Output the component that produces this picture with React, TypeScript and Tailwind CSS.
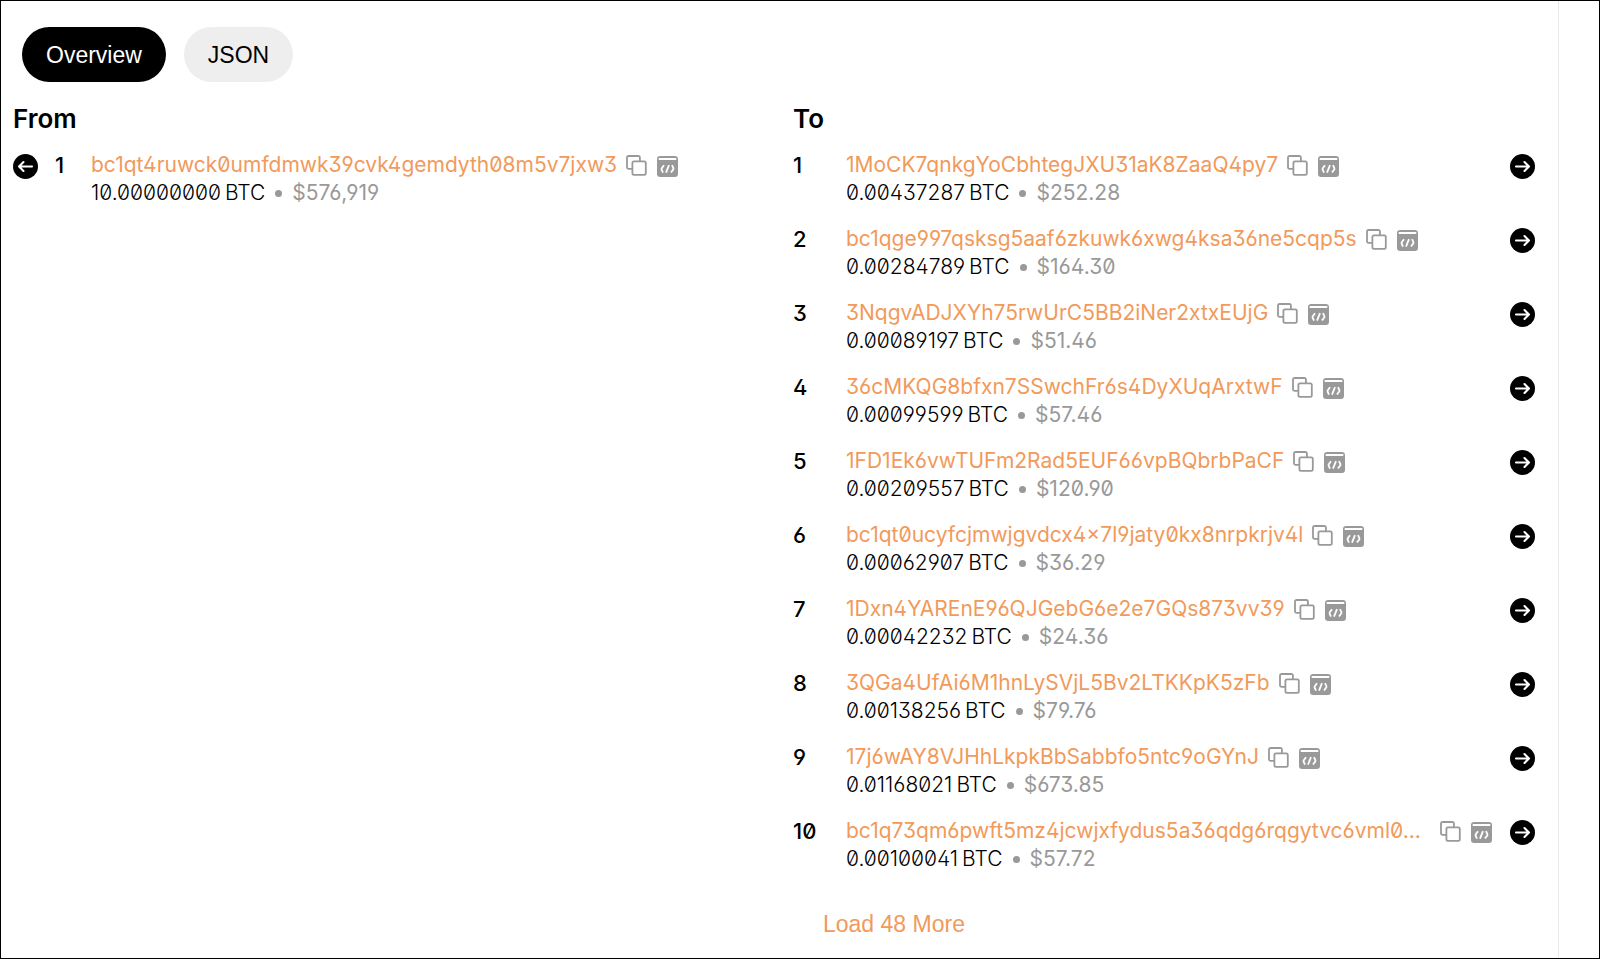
import { useState } from 'react';

interface Entry {
  address: string;
  btc: string;
  usd: string;
}

const inputs: Entry[] = [
  { address: 'bc1qt4ruwck0umfdmwk39cvk4gemdyth08m5v7jxw3', btc: '10.00000000', usd: '$576,919' },
];

const outputs: Entry[] = [
  { address: '1MoCK7qnkgYoCbhtegJXU31aK8ZaaQ4py7', btc: '0.00437287', usd: '$252.28' },
  { address: 'bc1qge997qsksg5aaf6zkuwk6xwg4ksa36ne5cqp5s', btc: '0.00284789', usd: '$164.30' },
  { address: '3NqgvADJXYh75rwUrC5BB2iNer2xtxEUjG', btc: '0.00089197', usd: '$51.46' },
  { address: '36cMKQG8bfxn7SSwchFr6s4DyXUqArxtwF', btc: '0.00099599', usd: '$57.46' },
  { address: '1FD1Ek6vwTUFm2Rad5EUF66vpBQbrbPaCF', btc: '0.00209557', usd: '$120.90' },
  { address: 'bc1qt0ucyfcjmwjgvdcx4x7l9jaty0kx8nrpkrjv4l', btc: '0.00062907', usd: '$36.29' },
  { address: '1Dxn4YAREnE96QJGebG6e2e7GQs873vv39', btc: '0.00042232', usd: '$24.36' },
  { address: '3QGa4UfAi6M1hnLySVjL5Bv2LTKKpK5zFb', btc: '0.00138256', usd: '$79.76' },
  { address: '17j6wAY8VJHhLkpkBbSabbfo5ntc9oGYnJ', btc: '0.01168021', usd: '$673.85' },
  { address: 'bc1q73qm6pwft5mz4jcwjxfydus5a36qdg6rqgytvc6vml0...', btc: '0.00100041', usd: '$57.72' },
];

function CopyIcon() {
  return (
    <svg className="w-[21px] h-[21px]" viewBox="0 0 21 21" fill="none" stroke="#999999" strokeWidth="1.8">
      <path d="M6.4 13.9H2.6A1.6 1.6 0 0 1 1 12.3V2.6A1.6 1.6 0 0 1 2.6 1h9.7A1.6 1.6 0 0 1 13.9 2.6v3.6" />
      <rect x="6.4" y="6.4" width="13.4" height="13.4" rx="1.6" />
    </svg>
  );
}

function CodeIcon() {
  return (
    <svg className="w-[21px] h-[21px]" viewBox="0 0 21 21" fill="none">
      <rect width="21" height="21" rx="3.2" fill="#999999" />
      <path d="M2.4 3h16.2" stroke="#fff" strokeWidth="1.8" strokeLinecap="round" />
      <path
        d="M7 9.2L4.6 12.6v1L6 16.6M15 9.2l1.4 3v1L14 16.6M12 9.2L9 16.6"
        stroke="#fff"
        strokeWidth="1.8"
        strokeLinejoin="round"
      />
    </svg>
  );
}

function ArrowIcon({ left = false }: { left?: boolean }) {
  return (
    <svg className="w-[25px] h-[25px]" viewBox="0 0 25 25" fill="none">
      <circle cx="12.5" cy="12.5" r="12.5" fill="#000" />
      <path
        d={left ? 'M19 12.5H6M10.5 8L6 12.5l4.5 4.5' : 'M6 12.5H19M14.5 8l4.5 4.5-4.5 4.5'}
        stroke="#fff"
        strokeWidth="2.1"
        strokeLinecap="round"
        strokeLinejoin="round"
      />
    </svg>
  );
}

function EntryBody({ entry }: { entry: Entry }) {
  const shortened = entry.address.endsWith('...');

  return (
    <div className="min-w-0 flex-1">
      <div className="flex items-start h-6">
        <a
          href="#address"
          className={`block h-[25px] overflow-hidden whitespace-nowrap leading-[26px] text-[#f19a5b] ${shortened ? 'flex-1' : ''}`}
        >
          {entry.address}
        </a>
        <button type="button" aria-label="Copy address" className="ml-[9px] mt-[3px] shrink-0">
          <CopyIcon />
        </button>
        <button type="button" aria-label="View script" className="ml-[10px] mt-1 shrink-0">
          <CodeIcon />
        </button>
      </div>
      <div className="mt-[3px] flex items-center leading-7">
        <span className="font-light">{entry.btc}</span>
        <span className="ml-1 font-light">BTC</span>
        <span className="mx-[10px] size-[7px] rounded-full bg-[#999999]" />
        <span className="text-[#999999]">{entry.usd}</span>
      </div>
    </div>
  );
}

export default function App() {
  const [tab, setTab] = useState<'overview' | 'json'>('overview');

  const tabClass = (active: boolean) =>
    `h-[55px] px-6 pt-0.5 rounded-full font-['Liberation_Sans',Arial,sans-serif] text-[23px] ${
      active ? 'bg-black text-white' : 'bg-[#eeeeee] text-black'
    }`;

  return (
    <div className="min-h-screen flex border border-black bg-white text-black text-[21px] font-['Inter',sans-serif] [font-feature-settings:'zero','ss01']">
      <main className="flex-1 min-w-0 border-r border-[#e8e8e8] pt-[26px] pl-3 pr-[23px]">
        <div className="flex gap-[18px] pl-[9px]">
          <button type="button" className={tabClass(tab === 'overview')} onClick={() => setTab('overview')}>
            Overview
          </button>
          <button type="button" className={tabClass(tab === 'json')} onClick={() => setTab('json')}>
            JSON
          </button>
        </div>

        <div className="mt-[21px] grid grid-cols-2 gap-[38px]">
          <section>
            <h2 className="text-[26px] leading-8 font-semibold">From</h2>
            <ul className="mt-[17px] flex flex-col gap-[19px]">
              {inputs.map((entry, i) => (
                <li key={entry.address} className="flex items-start">
                  <button type="button" aria-label="Previous transaction" className="mt-0.5 mr-[17px] shrink-0">
                    <ArrowIcon left />
                  </button>
                  <span className="w-9 shrink-0 text-[22px] leading-[26px] font-medium">{i + 1}</span>
                  <EntryBody entry={entry} />
                </li>
              ))}
            </ul>
          </section>

          <section>
            <h2 className="text-[26px] leading-8 font-semibold">To</h2>
            <ul className="mt-[17px] flex flex-col gap-[19px]">
              {outputs.map((entry, i) => (
                <li key={entry.address} className="flex items-start">
                  <span className="w-[53px] shrink-0 text-[22px] leading-[26px] font-medium">{i + 1}</span>
                  <EntryBody entry={entry} />
                  <button type="button" aria-label="Next transaction" className="mt-0.5 ml-[18px] shrink-0">
                    <ArrowIcon />
                  </button>
                </li>
              ))}
            </ul>
            <button
              type="button"
              className="mt-[35px] ml-[30px] font-['Liberation_Sans',Arial,sans-serif] text-[23px] leading-8 text-[#f19a5b]"
            >
              Load 48 More
            </button>
          </section>
        </div>
      </main>
      <div className="w-10 shrink-0" />
    </div>
  );
}
